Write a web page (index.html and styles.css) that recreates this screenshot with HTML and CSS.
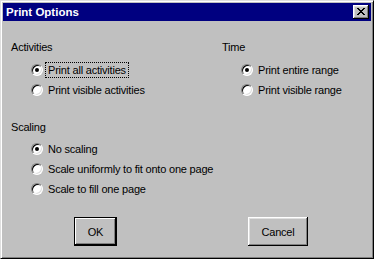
FILE: index.html
```html
<!DOCTYPE html>
<html lang="en">
<head>
    <meta charset="UTF-8">
    <title>Print Options</title>
    <link rel="stylesheet" href="styles.css">
</head>
<body>
<div class="window">
    <!-- Title bar -->
    <div class="titlebar">
        <span class="title">Print Options</span>
        <button class="close-btn" aria-label="Close">
            <svg width="8" height="7" viewBox="0 0 8 7" shape-rendering="crispEdges">
                <path d="M0 0h2v1h-2z M6 0h2v1h-2z M1 1h2v1h-2z M5 1h2v1h-2z M2 2h4v1h-4z M3 3h2v1h-2z M2 4h4v1h-4z M1 5h2v1h-2z M5 5h2v1h-2z M0 6h2v1h-2z M6 6h2v1h-2z" fill="#000"/>
            </svg>
        </button>
    </div>

    <div class="content">
        <div class="top-row">
            <div class="group">
                <div class="group-label">Activities</div>
                <div class="options indent-20">
                    <div class="option"><span class="radio checked"></span><span class="text focus">Print all activities</span></div>
                    <div class="option"><span class="radio"></span><span class="text">Print visible activities</span></div>
                </div>
            </div>
            <div class="group">
                <div class="group-label">Time</div>
                <div class="options indent-19">
                    <div class="option"><span class="radio checked"></span><span class="text">Print entire range</span></div>
                    <div class="option"><span class="radio"></span><span class="text">Print visible range</span></div>
                </div>
            </div>
        </div>

        <div class="group scaling">
            <div class="group-label">Scaling</div>
            <div class="options indent-20">
                <div class="option"><span class="radio checked"></span><span class="text">No scaling</span></div>
                <div class="option"><span class="radio"></span><span class="text">Scale uniformly to fit onto one page</span></div>
                <div class="option"><span class="radio"></span><span class="text">Scale to fill one page</span></div>
            </div>
        </div>

        <div class="buttons">
            <button class="btn default">OK</button>
            <button class="btn cancel">Cancel</button>
        </div>
    </div>
</div>
</body>
</html>
```

FILE: styles.css
```css
* {
    box-sizing: border-box;
}

body {
    margin: 0;
    padding: 0;
    background-color: #c0c0c0;
    font-family: "Liberation Sans", Arial, sans-serif;
    font-size: 11px;
    letter-spacing: -0.2px;
    color: #000;
}

/* Window frame */
.window {
    width: 374px;
    height: 259px;
    background-color: #c0c0c0;
    border: 1px solid;
    border-color: #dfdfdf #000 #000 #dfdfdf;
    box-shadow: inset 1px 1px #fff, inset -1px -1px #808080;
    padding: 2px;
    display: flex;
    flex-direction: column;
}

.titlebar {
    height: 18px;
    background-color: #000080;
    display: flex;
    align-items: center;
    justify-content: space-between;
    padding: 0 2px 0 3px;
}

.titlebar .title {
    color: #fff;
    font-weight: bold;
    font-size: 11.5px;
    letter-spacing: 0;
    line-height: 14px;
}

.close-btn {
    width: 16px;
    height: 14px;
    padding: 0;
    border: none;
    background-color: #c0c0c0;
    box-shadow: inset -1px -1px #000, inset 1px 1px #fff, inset -2px -2px #808080, inset 2px 2px #dfdfdf;
    display: flex;
    align-items: center;
    justify-content: center;
}

.close-btn svg {
    display: block;
    margin: 0 0 1px 0;
}

/* Contents */
.content {
    padding: 20px 8px 0 8px;
}

.top-row {
    display: grid;
    grid-template-columns: 211px 1fr;
}

.group-label {
    line-height: 12px;
}

.options {
    display: flex;
    flex-direction: column;
    gap: 4px;
    margin-top: 9px;
}

.indent-20 {
    padding-left: 20px;
}

.indent-19 {
    padding-left: 19px;
}

.option {
    display: flex;
    align-items: center;
    height: 16px;
}

.option .text {
    line-height: 12px;
    padding: 1px 2px;
    border: 1px dotted transparent;
    margin-left: 2px;
}

.option .text.focus {
    border-color: #000;
}

.radio {
    position: relative;
    width: 12px;
    height: 12px;
    border-radius: 50%;
    background-color: #fff;
    border: 1px solid;
    border-color: #808080 #fff #fff #808080;
    box-shadow: inset 1px 1px #000, inset -1px -1px #dfdfdf;
    flex-shrink: 0;
}

.radio.checked::after {
    content: "";
    position: absolute;
    left: 3px;
    top: 3px;
    width: 4px;
    height: 4px;
    border-radius: 50%;
    background-color: #000;
}

.scaling {
    margin-top: 23px;
}

.scaling .options {
    margin-top: 8px;
}

/* Buttons */
.buttons {
    display: flex;
    gap: 131px;
    padding-left: 63px;
    margin-top: 20px;
}

.btn {
    height: 29px;
    padding: 0;
    border: none;
    background-color: #c0c0c0;
    font-family: "Liberation Sans", Arial, sans-serif;
    font-size: 11px;
    letter-spacing: -0.2px;
    color: #000;
    box-shadow: inset -1px -1px #000, inset 1px 1px #fff, inset -2px -2px #808080, inset 2px 2px #dfdfdf;
}

.btn.default {
    width: 43px;
    border: 1px solid #000;
    box-shadow: inset -1px -1px #000, inset 1px 1px #fff, inset -2px -2px #808080;
}

.btn.cancel {
    width: 60px;
}
```
